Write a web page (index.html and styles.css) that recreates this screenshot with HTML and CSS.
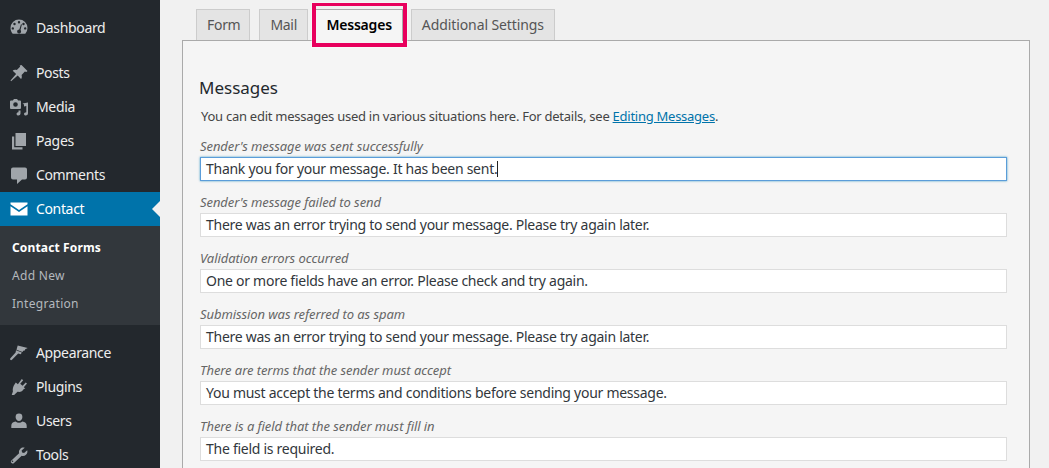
FILE: index.html
```html
<!DOCTYPE html>
<html lang="en">
<head>
<meta charset="utf-8">
<title>Contact Form Messages</title>
<link rel="stylesheet" href="styles.css">
</head>
<body>
<div class="app">
  <nav class="side">
    <ul class="menu menu-dash">
      <li class="item item-first"><svg class="ico" viewBox="0 0 20 20"><path fill-rule="evenodd" d="M10 2.500a8.500 8.500 0 0 0-8.500 8.500c0 2.200.8 4.200 2.200 5.700h12.600a8.400 8.400 0 0 0 2.200-5.700A8.500 8.500 0 0 0 10 2.500zM10 4a1.200 1.200 0 1 1 0 2.400A1.200 1.200 0 0 1 10 4zM5.500 5.800a1.200 1.200 0 1 1 0 2.400 1.200 1.200 0 0 1 0-2.400zm9 0a1.200 1.200 0 1 1 0 2.400 1.200 1.200 0 0 1 0-2.400zM3.800 10.200a1.200 1.200 0 1 1 0 2.400 1.200 1.200 0 0 1 0-2.400zm12.400 0a1.200 1.200 0 1 1 0 2.400 1.200 1.200 0 0 1 0-2.400zM12 7.200l.9.400-1.400 5.500c.5.400.6 1 .6 1.500a2 2 0 0 1-4 0c0-1.200 1-2 2.200-2z"/></svg><span>Dashboard</span></li>
    </ul>
    <ul class="menu menu-main">
      <li class="item"><svg class="ico" viewBox="0 0 20 20"><path d="M12.500 2l6 6-1.200 1-1.400-.4-3.300 3.300c.5 1.800.2 3.300-.6 4.100l-3.300-3.400-6.600 5.600-.6-.6 5.600-6.600-3.400-3.300c.8-.8 2.300-1.100 4.100-.6l3.300-3.300-.4-1.400z"/></svg><span>Posts</span></li>
      <li class="item"><svg class="ico" viewBox="0 0 20 20"><path fill-rule="evenodd" d="M2 3.500h1.800L5 2h3l1.200 1.500H11a1 1 0 0 1 1 1V11a1 1 0 0 1-1 1H2a1 1 0 0 1-1-1V4.500a1 1 0 0 1 1-1zM6.500 5.200a2.300 2.300 0 1 0 0 4.600 2.300 2.300 0 0 0 0-4.600zM13.500 6.500l5.500-1v10.700c0 1.300-1.100 2.300-2.300 2.300-.9 0-1.700-.6-1.700-1.500 0-1.100 1.100-1.800 2.300-1.800V9l-2.300.400V7.500zM9.500 13.500h2v3c0 1.100-1 2-2.200 2-.9 0-1.800-.6-1.800-1.500 0-1.100 1-1.700 2-1.700z"/></svg><span>Media</span></li>
      <li class="item"><svg class="ico" viewBox="0 0 20 20"><path d="M6.500 2H17v13H6.500zM3 5.500h2.200V16.300H13.500V18.500H3z"/></svg><span>Pages</span></li>
      <li class="item"><svg class="ico" viewBox="0 0 20 20"><path d="M4 2.500h12a2 2 0 0 1 2 2v8a2 2 0 0 1-2 2h-3l-5 4.500v-4.500H4a2 2 0 0 1-2-2v-8a2 2 0 0 1 2-2z"/></svg><span>Comments</span></li>
      <li class="item item-active"><svg class="ico" viewBox="0 0 20 20"><path d="M1.500 3.500h17v1.700L10 11 1.500 5.200zM1.500 7.200L10 13l8.500-5.800v9.300h-17z"/></svg><span>Contact</span></li>
      <li class="sub">
        <a class="sub-link sub-current">Contact Forms</a>
        <a class="sub-link">Add New</a>
        <a class="sub-link">Integration</a>
      </li>
    </ul>
    <ul class="menu menu-rest">
      <li class="item"><svg class="ico" viewBox="0 0 20 20"><path d="M8.700 2.500l10 2.500-2.500 1.200-.4 1.300-1.500.2-.8 1.300-6-2.300zM7 7.300l5.800 2.300-1 1.700-2.600-.8-6.200 6.300c-.5.500-1.300.5-1.700 0-.4-.5-.3-1.100.1-1.500l5.200-5.800z"/></svg><span>Appearance</span></li>
      <li class="item"><svg class="ico" viewBox="0 0 20 20"><path d="M12.800 2l1.400 1.200-3 3.500 2.400 2.100 3.100-3.400 1.300 1.200-3.200 3.600 1.500 1.300-1.500.5c-1.400 2.300-3.300 3.400-6.300 2.800l-3.400 3.300H2.700l1.200-3.500c-.5-2.500.2-5.700 1.900-7.700l1-1.400 2.100 1.800z"/></svg><span>Plugins</span></li>
      <li class="item"><svg class="ico" viewBox="0 0 20 20"><path d="M10 2.500a3.400 3.400 0 0 1 3.400 3.400c0 1.900-1.500 4-3.400 4s-3.400-2.100-3.400-4A3.400 3.400 0 0 1 10 2.500zM6.600 10.600c.9.800 2.100 1.200 3.400 1.200s2.500-.4 3.400-1.200c2.500.2 4.300 1.800 4.300 4.100V17H2.300v-2.300c0-2.300 1.800-3.900 4.300-4.100z"/></svg><span>Users</span></li>
      <li class="item"><svg class="ico" viewBox="0 0 20 20"><path d="M18.200 5.200c.5 1.600.1 3.400-1.200 4.600-1.200 1.100-2.800 1.400-4.300 1L5 18c-.7.700-1.700.7-2.400 0l-.3-.3c-.7-.7-.6-1.700.1-2.300l7.700-7.200c-.4-1.500-.1-3.100 1.100-4.300 1.200-1.200 2.900-1.600 4.500-1.100L12.600 5.600l.5 2 2 .5zM3.500 15.500a.8.800 0 1 0 0 1.600.8.800 0 0 0 0-1.600z"/></svg><span>Tools</span></li>
    </ul>
  </nav>
  <main class="main">
    <div class="tabs">
      <a class="tab tab-form">Form</a>
      <a class="tab tab-mail">Mail</a>
      <a class="tab tab-active">Messages<span class="callout"></span></a>
      <a class="tab">Additional Settings</a>
    </div>
    <section class="panel">
      <h2 class="title">Messages</h2>
      <p class="intro">You can edit messages used in various situations here. For details, see <a class="link">Editing Messages</a>.</p>
      <div class="field"><p class="label">Sender's message was sent successfully</p><div class="input input-focus"><span>Thank you for your message. It has been sent.</span><i class="caret"></i></div></div>
      <div class="field"><p class="label">Sender's message failed to send</p><div class="input"><span>There was an error trying to send your message. Please try again later.</span></div></div>
      <div class="field"><p class="label">Validation errors occurred</p><div class="input"><span>One or more fields have an error. Please check and try again.</span></div></div>
      <div class="field"><p class="label">Submission was referred to as spam</p><div class="input"><span>There was an error trying to send your message. Please try again later.</span></div></div>
      <div class="field"><p class="label">There are terms that the sender must accept</p><div class="input"><span>You must accept the terms and conditions before sending your message.</span></div></div>
      <div class="field"><p class="label">There is a field that the sender must fill in</p><div class="input"><span>The field is required.</span></div></div>
    </section>
  </main>
</div>
</body>
</html>
```
FILE: styles.css
```css
* { box-sizing: border-box; }
html, body { margin: 0; height: 100%; overflow: hidden; }
body { background: #f1f1f1; font-family: "Noto Sans", sans-serif; color: #32373c; }
.app { display: flex; height: 468px; overflow: hidden; }

.side { width: 160px; flex: none; background: #23282d; padding-top: 10px; color: #eee; }
.menu { list-style: none; margin: 0; padding: 0; }
.menu-main { margin-top: 12px; }
.menu-rest { margin-top: 11px; }
.item { height: 34px; display: flex; align-items: center; padding-left: 9px; gap: 7px; font-size: 14px; letter-spacing: -.35px; position: relative; }
.item span { margin-bottom: 2px; }
.item-first span { margin-bottom: 0; }
.ico { width: 20px; height: 20px; fill: #a0a5aa; flex: none; margin-bottom: 1px; }
.item-active { background: #0073aa; color: #fff; }
.item-active .ico { fill: #fff; }
.item-active::after { content: ""; position: absolute; right: 0; top: 9px; border: 8px solid transparent; border-right-color: #f1f1f1; border-left-width: 0; }
.sub { background: #32373c; height: 99px; padding-top: 8px; display: flex; flex-direction: column; }
.sub-link { height: 28px; line-height: 28px; padding-left: 12px; font-size: 12px; color: #b4b9be; letter-spacing: .3px; }
.sub-current { color: #fff; font-weight: 700; letter-spacing: .15px; }

.main { flex: 1; min-width: 0; padding: 9px 19px 0 22px; }
.tabs { display: flex; padding-left: 14px; height: 31px; }
.tab { height: 31px; margin-right: 9px; padding: 0 10px; border: 1px solid #ccc; border-bottom: 0; background: #e4e4e4; font-size: 14px; line-height: 30px; color: #555; letter-spacing: -.1px; }
.tab-form { padding: 0 9px 0 10px; letter-spacing: -.3px; }
.tab-mail { letter-spacing: -.3px; }
.tab-active { position: relative; height: 32px; padding: 0 10px; margin: 0 8px 0 -1.600px; background: #f5f5f5; color: #000; font-weight: 600; border-color: #aaa; letter-spacing: -.2px; z-index: 1; }
.callout { position: absolute; left: -4px; top: -7px; width: 95px; height: 44px; border: 4px solid #e8005d; border-top-width: 3px; box-shadow: 0 0 0 1px rgba(255,255,255,.4); }
.panel { height: 460px; background: #f5f5f5; border: 1px solid #aaa; padding: 0 22px 0 16px; }
.title { margin: 0; padding-top: 35px; font-size: 17px; line-height: 24px; font-weight: 400; color: #23282d; }
.intro { margin: 6px 0 0 2px; font-size: 13px; line-height: 20px; color: #444; letter-spacing: -.26px; }
.link { color: #0073aa; text-decoration: underline; }
.field { height: 56px; margin-left: 1px; }
.intro + .field { margin-top: 8px; }
.label { margin: 0; height: 23px; padding-top: 4px; font-size: 13px; line-height: 17px; font-style: italic; color: #666; letter-spacing: -.08px; }
.input { height: 24px; background: #fff; border: 1px solid #ddd; padding-left: 5px; font-size: 14px; line-height: 20px; color: #32373c; white-space: nowrap; display: flex; align-items: center; letter-spacing: -.27px; }
.input-focus { border-color: #5b9dd9; box-shadow: 0 0 2px rgba(30,140,190,.8); }
.caret { width: 1px; height: 16px; background: #222; }
```
